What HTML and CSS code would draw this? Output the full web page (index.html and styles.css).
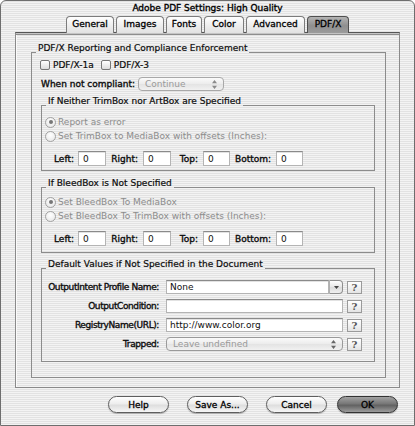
FILE: index.html
```html
<!DOCTYPE html>
<html lang="en">
<head>
    <meta charset="UTF-8">
    <meta name="viewport" content="width=device-width, initial-scale=1.0">
    <title>Adobe PDF Settings: High Quality</title>
    <link rel="stylesheet" href="styles.css">
</head>
<body>
    <div class="window">
        <div class="titlebar">Adobe PDF Settings: High Quality</div>

        <div class="tabs">
            <div class="tab">General</div>
            <div class="tab">Images</div>
            <div class="tab">Fonts</div>
            <div class="tab">Color</div>
            <div class="tab">Advanced</div>
            <div class="tab active">PDF/X</div>
        </div>

        <div class="pane">
            <div class="group outer">
                <div class="group-title">PDF/X Reporting and Compliance Enforcement</div>

                <div class="checks">
                    <label class="check"><span class="box"></span>PDF/X-1a</label>
                    <label class="check"><span class="box"></span>PDF/X-3</label>
                </div>

                <div class="compliant">
                    <span class="label">When not compliant:</span>
                    <div class="popup disabled continue">
                        <span>Continue</span>
                        <svg class="arrows" width="5" height="9" viewBox="0 0 5 9"><path d="M2.5 0L5 3.2H0z M2.5 9L0 5.8h5z" fill="#8a8a8a"/></svg>
                    </div>
                </div>

                <!-- trim box -->
                <div class="group inner g-trim">
                    <div class="group-title">If Neither TrimBox nor ArtBox are Specified</div>
                    <div class="radio disabled first"><span class="dot on"></span>Report as error</div>
                    <div class="radio disabled"><span class="dot"></span>Set TrimBox to MediaBox with offsets (Inches):</div>
                    <div class="offsets">
                        <span class="label">Left:</span><span class="field">0</span>
                        <span class="label">Right:</span><span class="field">0</span>
                        <span class="label">Top:</span><span class="field">0</span>
                        <span class="label">Bottom:</span><span class="field">0</span>
                    </div>
                </div>

                <!-- bleed box -->
                <div class="group inner g-bleed">
                    <div class="group-title">If BleedBox is Not Specified</div>
                    <div class="radio disabled first"><span class="dot on"></span>Set BleedBox To MediaBox</div>
                    <div class="radio disabled"><span class="dot"></span>Set BleedBox To TrimBox with offsets (Inches):</div>
                    <div class="offsets">
                        <span class="label">Left:</span><span class="field">0</span>
                        <span class="label">Right:</span><span class="field">0</span>
                        <span class="label">Top:</span><span class="field">0</span>
                        <span class="label">Bottom:</span><span class="field">0</span>
                    </div>
                </div>

                <!-- defaults -->
                <div class="group inner g-defaults">
                    <div class="group-title">Default Values if Not Specified in the Document</div>
                    <div class="defaults">
                        <span class="label">OutputIntent Profile Name:</span>
                        <div class="combo">
                            <span class="field wide">None</span>
                            <span class="combo-btn">
                                <svg width="5" height="3" viewBox="0 0 5 3"><path d="M0 0h5L2.5 3z" fill="#444"/></svg>
                            </span>
                        </div>
                        <span class="help">?</span>

                        <span class="label">OutputCondition:</span>
                        <span class="field wide"></span>
                        <span class="help">?</span>

                        <span class="label">RegistryName(URL):</span>
                        <span class="field wide">http://www.color.org</span>
                        <span class="help">?</span>

                        <span class="label">Trapped:</span>
                        <div class="popup disabled trapped">
                            <span>Leave undefined</span>
                            <svg class="arrows" width="5" height="9" viewBox="0 0 5 9"><path d="M2.5 0L5 3.2H0z M2.5 9L0 5.8h5z" fill="#666"/></svg>
                        </div>
                        <span class="help">?</span>
                    </div>
                </div>
            </div>
        </div>

        <div class="footer">
            <button class="btn">Help</button>
            <button class="btn">Save As...</button>
            <button class="btn">Cancel</button>
            <button class="btn default">OK</button>
        </div>
    </div>
</body>
</html>
```

FILE: styles.css
```css
* {
    margin: 0;
    padding: 0;
    box-sizing: border-box;
}

body {
    width: 415px;
    height: 426px;
    overflow: hidden;
    font-family: 'DejaVu Sans', 'Liberation Sans', sans-serif;
    font-size: 9px;
    color: #0c0c0c;
    -webkit-text-stroke: 0.2px;
}

.window {
    width: 415px;
    height: 426px;
    border: 1px solid #6e6e6e;
    border-radius: 6px 6px 0 0;
    background: repeating-linear-gradient(#f3f3f3 0, #f3f3f3 1px, #e2e2e2 1px, #e2e2e2 2px) fixed;
    overflow: hidden;
}

.titlebar {
    height: 15px;
    line-height: 15px;
    text-align: center;
    color: #000;
    -webkit-text-stroke: 0.35px;
}

/* tabs */
.tabs {
    display: grid;
    grid-template-columns: 48px 48px 36px 40px 59px 42px;
    column-gap: 2px;
    justify-content: center;
    height: 16px;
    position: relative;
    z-index: 1;
}

.tab {
    height: 17px;
    line-height: 15px;
    text-align: center;
    border: 1px solid #7c7c7c;
    border-bottom: none;
    border-radius: 4px 4px 0 0;
    background: linear-gradient(#ffffff, #ececec 60%, #e2e2e2);
    color: #000;
    -webkit-text-stroke: 0.3px;
}

.tab.active {
    border-color: #4f4f4f;
    background: linear-gradient(#b4b4b4, #8f8f8f 55%, #9c9c9c);
}

/* tab pane */
.pane {
    margin: 0 14px 0 14px;
    border: 1px solid #8a8a8a;
    border-top-color: #555;
    box-shadow: inset 0 1px 0 #c4c4c4, inset 0 2px 0 #8e8e8e, inset 1px 0 0 #fafafa;
    padding: 19px 13px 9px 15px;
}

/* group boxes */
.group {
    border: 1px solid #8c8c8c;
}

.group-title {
    width: fit-content;
    margin: -11px 0 0 4px;
    padding: 0 2px;
    line-height: 12px;
    background: repeating-linear-gradient(#f3f3f3 0, #f3f3f3 1px, #e2e2e2 1px, #e2e2e2 2px) fixed;
}

.outer {
    padding-bottom: 15px;
}

.inner {
    margin: 0 10px 0 9px;
}

.g-trim {
    margin-top: 14px;
    padding-bottom: 4px;
}

.g-bleed {
    margin-top: 16px;
    padding-bottom: 6px;
}

.g-defaults {
    margin-top: 15px;
    padding-bottom: 10px;
}

.g-trim .radio.first {
    margin-top: 9px;
}

.g-bleed .radio.first {
    margin-top: 7px;
}

.label {
    -webkit-text-stroke: 0.35px;
}

/* checkboxes */
.checks {
    display: flex;
    align-items: center;
    height: 12px;
    margin: 5px 0 0 8px;
    gap: 7px;
}

.check {
    display: flex;
    align-items: center;
    gap: 3px;
}

.box {
    width: 10px;
    height: 10px;
    border: 1px solid #777;
    border-radius: 2px;
    background: linear-gradient(#ffffff, #dcdcdc);
}

.compliant {
    display: flex;
    align-items: center;
    height: 14px;
    margin: 6px 0 0 9px;
    gap: 3px;
}

/* popups */
.popup {
    display: flex;
    align-items: center;
    justify-content: space-between;
    height: 14px;
    padding: 0 6px 0 6px;
    border: 1px solid #a8a8a8;
    border-radius: 4px;
    background: linear-gradient(#fbfbfb, #ececec 50%, #e3e3e3 50%, #f1f1f1);
}

.popup.disabled {
    color: #9a9a9a;
    -webkit-text-stroke: 0;
}

.popup.continue {
    width: 86px;
}

.popup.trapped {
    width: 177px;
    border-color: #9a9a9a;
}

/* radios */
.radio {
    display: flex;
    align-items: center;
    height: 12px;
    margin: 2px 0 0 3px;
    gap: 2px;
}

.radio.disabled {
    color: #8c8c8c;
    -webkit-text-stroke: 0;
}

.dot {
    width: 11px;
    height: 11px;
    border: 1px solid #a2a2a2;
    border-radius: 50%;
    background: radial-gradient(circle at 50% 35%, #ffffff, #e4e4e4);
    display: flex;
    align-items: center;
    justify-content: center;
}

.dot.on::after {
    content: "";
    width: 4px;
    height: 4px;
    border-radius: 50%;
    background: #777;
}

/* offsets */
.offsets {
    display: grid;
    grid-template-columns: 24px 28px 37px 28px 32px 27px 46px 27px;
    align-items: center;
    height: 15px;
    margin: 9px 0 0 12px;
}

.offsets .label {
    text-align: right;
    padding-right: 5px;
}

.field {
    display: block;
    height: 15px;
    line-height: 14px;
    padding-left: 4px;
    border: 1px solid #b4b4b4;
    border-top-color: #8a8a8a;
    background: #fff;
    box-shadow: inset 0 1px 0 #e2e2e2;
    color: #111;
    -webkit-text-stroke: 0;
}

/* defaults grid */
.defaults {
    display: grid;
    grid-template-columns: 124px 177px 19px;
    grid-auto-rows: 14px;
    row-gap: 5px;
    align-items: center;
    margin-top: 10px;
}

.defaults .label {
    justify-self: end;
    white-space: nowrap;
    letter-spacing: -0.4px;
    padding-right: 7px;
}

.field.wide {
    height: 14px;
    line-height: 12px;
    padding-left: 3px;
}

.combo {
    display: flex;
    height: 14px;
}

.combo .field {
    flex: 1;
}

.combo-btn {
    width: 14px;
    height: 14px;
    border: 1px solid #8e8e8e;
    border-left-color: #b0b0b0;
    border-radius: 0 4px 4px 0;
    background: linear-gradient(#fdfdfd, #e6e6e6 50%, #dadada 50%, #efefef);
    display: flex;
    align-items: center;
    justify-content: center;
}

.help {
    justify-self: end;
    width: 15px;
    height: 13px;
    border: 1px solid #9a9a9a;
    background: linear-gradient(#ffffff, #e4e4e4);
    font-family: 'DejaVu Serif', 'Liberation Serif', serif;
    font-weight: bold;
    font-size: 10px;
    line-height: 11px;
    text-align: center;
    color: #555;
    -webkit-text-stroke: 0;
}

/* footer buttons */
.footer {
    display: flex;
    justify-content: flex-end;
    padding: 8px 16px 0 0;
}

.btn {
    width: 61px;
    height: 17px;
    border: 1px solid #5e5e5e;
    border-radius: 9px;
    background: linear-gradient(#ffffff, #ededed 45%, #dedede 55%, #f6f6f6);
    box-shadow: 0 1px 1px rgba(0, 0, 0, 0.25);
    font-family: 'DejaVu Sans', 'Liberation Sans', sans-serif;
    font-size: 9px;
    color: #000;
    -webkit-text-stroke: 0.3px;
}

.btn + .btn {
    margin-left: 18px;
}

.btn.default {
    margin-left: 10px;
    border-color: #333;
    background: linear-gradient(#a2a2a2, #777 45%, #626262 55%, #9c9c9c);
    color: #000;
}
```
